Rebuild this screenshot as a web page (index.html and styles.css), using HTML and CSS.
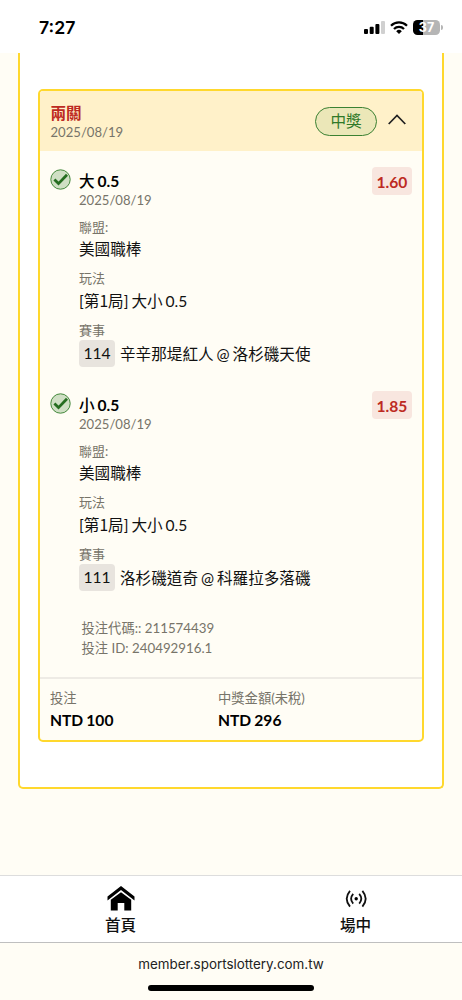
FILE: index.html
```html
<!DOCTYPE html>
<html lang="zh-Hant">
<head>
<meta charset="utf-8">
<meta name="viewport" content="width=device-width">
<title>投注紀錄</title>
<link rel="stylesheet" href="styles.css">
</head>
<body>
<div class="screen">
  <header class="status">
    <span class="time">7:27</span>
    <div class="indicators">
      <svg class="signal" width="21" height="13" viewBox="0 0 21 13"><rect x="0" y="8" width="4" height="5" rx="1"/><rect x="5.7" y="5.7" width="4" height="7.3" rx="1"/><rect x="11.4" y="3" width="4" height="10" rx="1"/><rect x="17" y="0" width="4" height="13" rx="1" fill="#d0d0d0"/></svg>
      <svg class="wifi" width="18" height="13" viewBox="0 0 18 13"><g fill="none" stroke="#000" stroke-width="2.3"><path d="M1 4.7a11.4 11.4 0 0 1 16 0"/><path d="M4 8a7.1 7.1 0 0 1 10 0"/></g><path d="M9 13 6.2 10.2a4 4 0 0 1 5.6 0z"/></svg>
      <div class="battery"><span>37</span></div><i class="cap"></i>
    </div>
  </header>
  <main class="page">
    <section class="frame">
      <article class="card">
        <div class="card-head">
          <div><div class="parlay">兩關</div><div class="date">2025/08/19</div></div>
          <span class="won">中獎</span>
          <svg class="chevron" width="18" height="11" viewBox="0 0 18 11" fill="none" stroke="#222" stroke-width="1.7"><path d="M.7 10 9 1.4 17.3 10"/></svg>
        </div>
        <div class="legs">
          <section class="leg">
            <svg class="check" width="21" height="21" viewBox="0 0 21 21"><circle cx="10.5" cy="10.5" r="9.7" fill="#cfdfc4" stroke="#43883b"/><path d="m4.4 10.6 4.1 4L17 5.8" fill="none" stroke="#256d20" stroke-width="2.8"/></svg>
            <div class="details">
              <div class="pick"><span class="medium">大</span> 0.5</div><div class="date">2025/08/19</div>
              <div class="label">聯盟:</div><div class="value">美國職棒</div>
              <div class="label">玩法</div><div class="value">[第<span class="numeral">1</span>局] 大小 0.5</div>
              <div class="label">賽事</div><div class="match"><span class="code">114</span><span>辛辛那堤紅人 @ 洛杉磯天使</span></div>
            </div>
            <span class="odds">1.60</span>
          </section>
          <section class="leg">
            <svg class="check" width="21" height="21" viewBox="0 0 21 21"><circle cx="10.5" cy="10.5" r="9.7" fill="#cfdfc4" stroke="#43883b"/><path d="m4.4 10.6 4.1 4L17 5.8" fill="none" stroke="#256d20" stroke-width="2.8"/></svg>
            <div class="details">
              <div class="pick"><span class="medium">小</span> 0.5</div><div class="date">2025/08/19</div>
              <div class="label">聯盟:</div><div class="value">美國職棒</div>
              <div class="label">玩法</div><div class="value">[第<span class="numeral">1</span>局] 大小 0.5</div>
              <div class="label">賽事</div><div class="match"><span class="code">111</span><span>洛杉磯道奇 @ 科羅拉多落磯</span></div>
            </div>
            <span class="odds">1.85</span>
          </section>
        </div>
        <div class="ids"><div>投注代碼:: 211574439</div><div>投注 ID: 240492916.1</div></div>
        <div class="totals">
          <div><div class="total-label">投注</div><div class="amount">NTD 100</div></div>
          <div><div class="total-label">中獎金額(未稅)</div><div class="amount">NTD 296</div></div>
        </div>
      </article>
    </section>
  </main>
  <nav class="tabs">
    <a class="tab"><svg width="28" height="25" viewBox="0 0 28 25"><path d="M14 0 .5 10.4v4L14 4l13.5 10.4v-4z"/><path d="M14 6.3 3.8 13.8v10.7h6.9V17h6.6v7.5h6.9V13.8z"/></svg><span>首頁</span></a>
    <a class="tab"><svg width="28" height="25" viewBox="0 0 28 25"><g fill="none" stroke="#111" stroke-width="1.8"><path d="M8 4.8Q1.4 12.7 8 20.6M11.2 7.8Q7 12.7 11.2 17.6M17.2 7.8Q21.4 12.7 17.2 17.6M20.4 4.8Q27 12.7 20.4 20.6"/></g><circle cx="14.2" cy="12.7" r="1.7"/></svg><span>場中</span></a>
  </nav>
  <footer class="address"><span>member.sportslottery.com.tw</span><div class="home-bar"></div></footer>
</div>
</body>
</html>
```
FILE: styles.css
```css
* { box-sizing: border-box; }
body { margin: 0; background: #fffdf5; color: #111; font-family: Lato, "Noto Sans CJK TC", sans-serif; font-size: 15.6px; }
svg { display: block; flex: none; }
.screen { width: 462px; height: 1000px; display: flex; flex-direction: column; overflow: hidden; }
.status { height: 53px; flex: none; background: #fff; display: flex; justify-content: space-between; padding: 15px 19px 0 39px; }
.time { font: 600 17.7px/26px Inter, sans-serif; color: #000; }
.indicators { display: flex; align-items: center; height: 25px; }
.wifi { margin: 0 5px 0 5px; }
.battery { width: 27px; height: 15px; border-radius: 4.5px; background: linear-gradient(90deg, #000 0 37%, #b5b5b5 37%); color: #fff; font: 700 12.5px/15px Inter, sans-serif; text-align: center; }
.cap { width: 2px; height: 5px; margin-left: 1px; border-radius: 0 2px 2px 0; background: #b5b5b5; }
.page { height: 822px; flex: none; padding: 0 18px; }
.frame { height: 736px; padding: 36px 18px 0; background: #fff; border: 2px solid #ffd82d; border-top: 0; border-radius: 0 0 5px 5px; }
.card { height: 653px; background: #fffdf5; border: 2px solid #ffd82d; border-radius: 5px; overflow: hidden; }
.card-head { height: 60px; display: flex; align-items: center; padding: 1px 16px 0 10.5px; background: #fff1c9; }
.card-head > div { flex: 1; padding-top: 2px; }
.parlay { font-weight: 700; line-height: 20px; color: #bd2a22; }
.date { font-size: 13.1px; line-height: 19px; color: #777469; }
.won { width: 62px; height: 29px; margin-right: 11px; border: 1px solid #3b8132; border-radius: 15px; background: #ebe7b8; color: #2f7928; line-height: 27px; text-align: center; }
.chevron { margin-top: -4px; }
.legs { display: flex; flex-direction: column; gap: 28px; padding: 20px 10px 0; }
.leg { height: 196.3px; display: flex; }
.check { margin: -2px 8px 0 0; }
.details { flex: 1; margin-top: -1px; word-spacing: -1px; }
.pick { font-weight: 700; line-height: 20px; color: #000; }
.medium { font-weight: 500; font-family: "Noto Sans CJK TC", sans-serif; }
.label { margin-top: 8px; font-size: 13px; line-height: 19px; color: #777469; }
.value { padding-top: 1px; line-height: 23px; color: #111; }
.value + .label { margin-top: 8px; }
.numeral { font-family: "Noto Sans CJK TC", sans-serif; }
.match { display: flex; align-items: center; gap: 5px; height: 27px; }
.code { width: 36px; height: 27px; border-radius: 4px; background: #e8e4de; line-height: 26px; text-align: center; }
.match > span + span { margin-top: -1px; }
.odds { width: 40px; height: 28px; margin-top: -4px; border-radius: 4px; background: #f8e6df; color: #bd2a22; font-weight: 700; line-height: 30px; text-align: center; }
.ids { height: 87.4px; padding: 26.4px 0 0 41.5px; border-bottom: 2px solid #eeebe5; font-size: 13.3px; line-height: 20px; color: #777469; }
.totals { display: grid; grid-template-columns: 168px 1fr; padding: 9px 10px 0; word-spacing: -.7px; }
.total-label { font-size: 13.3px; line-height: 21px; color: #777469; }
.amount { font-weight: 700; line-height: 23px; color: #000; }
.tabs { height: 68px; flex: none; display: grid; grid-template-columns: 235px 235px; padding: 0 0 0 3px; background: #fff; border-top: 1px solid #ddd; border-bottom: 1px solid #bfbfbf; }
.tab { display: flex; flex-direction: column; align-items: center; padding-top: 10px; font-weight: 500; font-family: "Noto Sans CJK TC", sans-serif; line-height: 25px; color: #111; }
.tab span { margin-top: 1px; }
.address { flex: 1; display: flex; flex-direction: column; align-items: center; padding-top: 11px; color: #222; font: 13.4px/20px Inter, sans-serif; }
.home-bar { width: 166px; height: 6px; margin-top: 11px; border-radius: 3px; background: #000; }
```
